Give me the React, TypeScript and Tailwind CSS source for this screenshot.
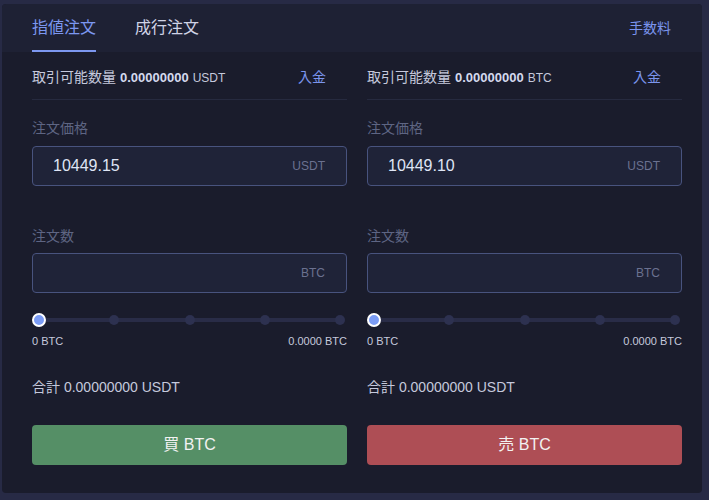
interface Side {
  available: string;
  availableUnit: string;
  price: string;
  action: string;
  buttonClass: string;
}

const sides: Side[] = [
  {
    available: "0.00000000",
    availableUnit: "USDT",
    price: "10449.15",
    action: "買 BTC",
    buttonClass: "bg-[#558f66]",
  },
  {
    available: "0.00000000",
    availableUnit: "BTC",
    price: "10449.10",
    action: "売 BTC",
    buttonClass: "bg-[#ae4e55]",
  },
];

const font = { fontFamily: '"Liberation Sans", "Noto Sans CJK JP", sans-serif' };

const Slider = () => (
  <div className="relative mt-5 flex h-[14px] w-full items-center justify-between">
    <div className="absolute left-[7px] right-[5px] top-1/2 h-1 -translate-y-1/2 bg-[#292c47]" />
    {[0, 1, 2, 3, 4].map((i) => (
      <div key={i} className="relative flex w-[14px] items-center justify-center">
        {i === 0 ? (
          <div className="h-[14px] w-[14px] rounded-full border-2 border-white bg-[#7b9cf5]" />
        ) : (
          <div className="h-[10px] w-[10px] rounded-full bg-[#2d3150]" />
        )}
      </div>
    ))}
  </div>
);

const OrderForm = ({ side }: { side: Side }) => {
  return (
    <div className="flex w-[315px] flex-col">
      <div className="flex h-[48px] items-center justify-between border-b border-[#262a3f] pt-[3px] pr-[21px]">
        <div className="flex items-baseline gap-1 text-[#c5c9dc]">
          <span className="text-[14px]">取引可能数量</span>
          <span className="text-[13px] font-bold text-[#d4d9ee]">{side.available}</span>
          <span className="text-[12px]">{side.availableUnit}</span>
        </div>
        <span className="text-[14px] text-[#7b95ee]">入金</span>
      </div>

      <div className="mt-[18px] h-5 text-[14px] leading-5 text-[#5e6583]">注文価格</div>
      <div className="mt-2 flex h-10 items-center justify-between rounded border border-[#48537e] bg-[#1f2338] pl-5 pr-[21px]">
        <span className="text-[16px] text-[#dfe5f5]">{side.price}</span>
        <span className="text-[12px] text-[#6b7190]">USDT</span>
      </div>

      <div className="mt-[40px] h-5 text-[14px] leading-5 text-[#5e6583]">注文数</div>
      <div className="mt-[7px] flex h-10 items-center justify-end rounded border border-[#48537e] bg-[#1f2338] pl-5 pr-[21px]">
        <span className="text-[12px] text-[#6b7190]">BTC</span>
      </div>

      <Slider />
      <div className="mt-[7px] flex h-[14px] items-center justify-between text-[11px] text-[#c5c9dc]">
        <span>0 BTC</span>
        <span>0.0000 BTC</span>
      </div>

      <div className="mt-[29px] h-5 text-[14px] leading-5 text-[#c5c9dc]">
        合計 0.00000000 USDT
      </div>

      <button className={`mt-7 h-10 w-full rounded-sm text-[16px] text-[#f2f2f2] ${side.buttonClass}`}>
        {side.action}
      </button>
    </div>
  );
};

const App = () => {
  return (
    <div className="h-[500px] w-[709px] bg-[#272a45] pl-[2px] pt-1" style={font}>
      <div className="h-[489px] w-[700px] overflow-hidden rounded-sm bg-[#1a1c2c]">
        <div className="flex h-12 items-stretch justify-between bg-[#1e2134] pl-[30px] pr-[31px]">
          <div className="flex items-stretch gap-[39px]">
            <div className="relative flex items-center text-[16px] text-[#7c97f0]">
              指値注文
              <div className="absolute bottom-0 left-0 right-0 h-[2px] bg-[#7c97f0]" />
            </div>
            <div className="flex items-center text-[16px] text-[#d0d3e6]">成行注文</div>
          </div>
          <div className="flex items-center text-[14px] text-[#7b95ee]">手数料</div>
        </div>

        <div className="flex gap-5 pl-[30px] pr-5">
          {sides.map((side, index) => (
            <OrderForm key={index} side={side} />
          ))}
        </div>
      </div>
    </div>
  );
};

export default App;
